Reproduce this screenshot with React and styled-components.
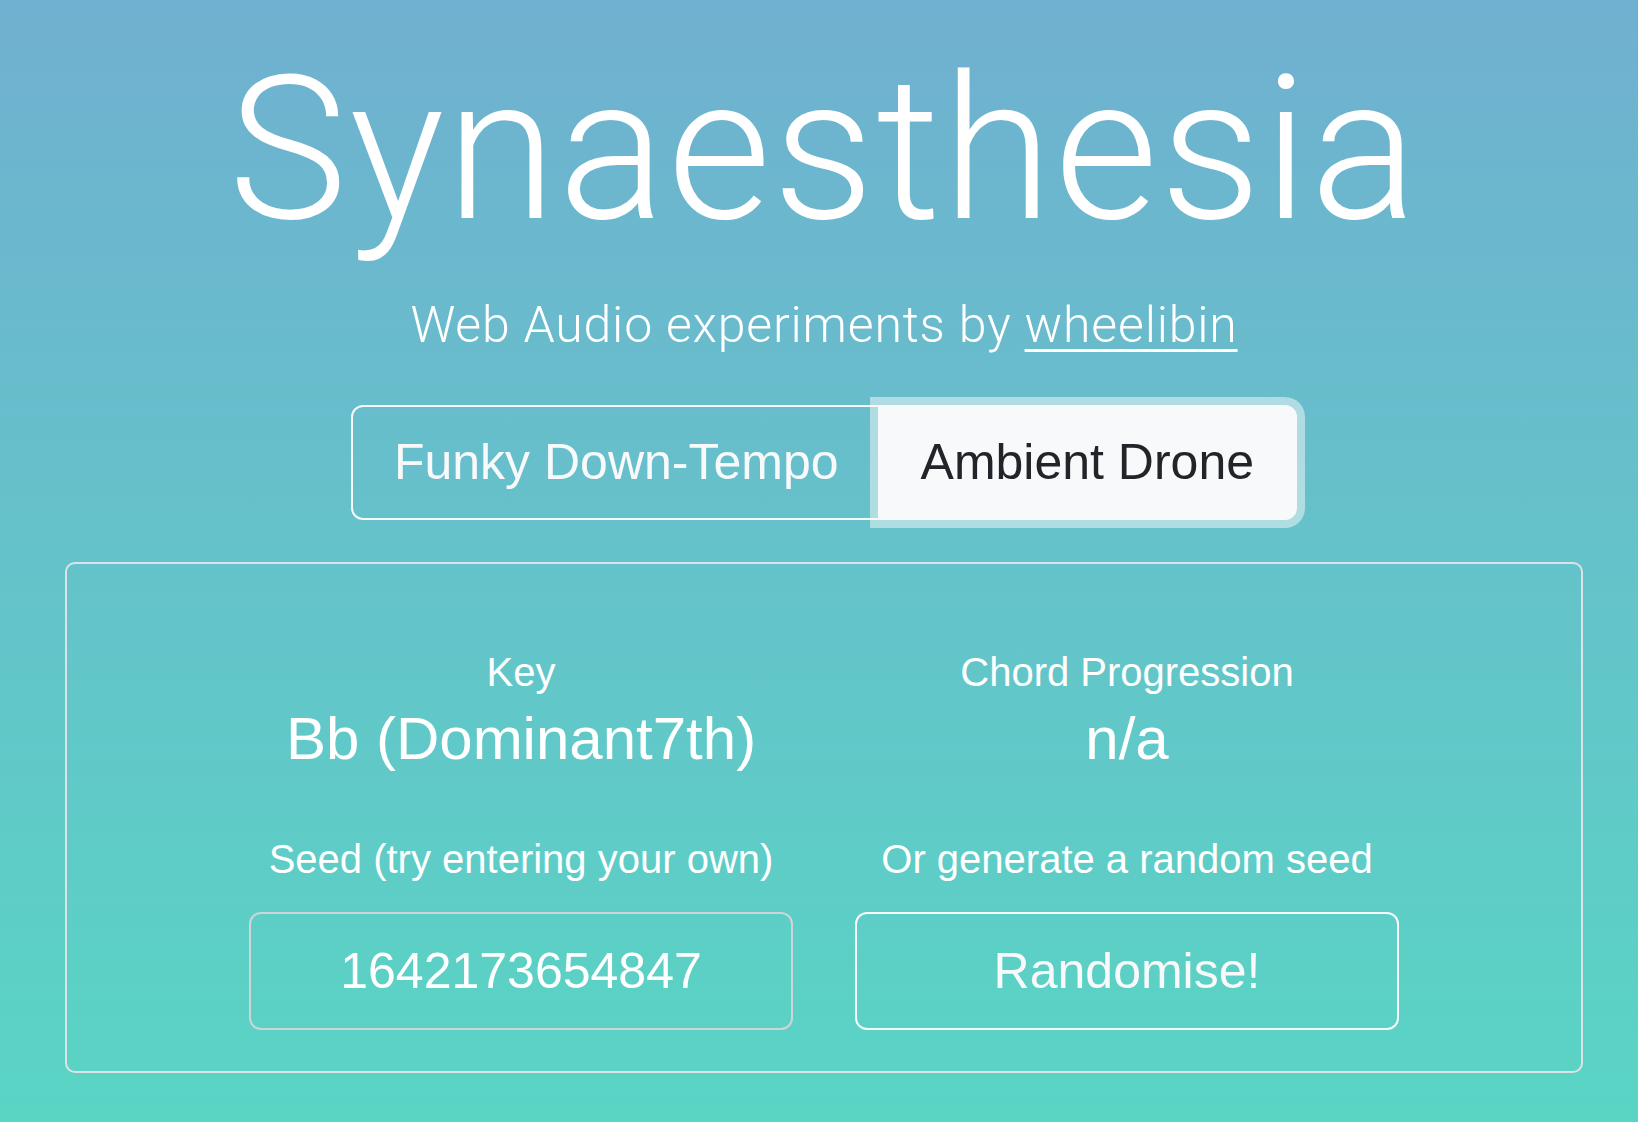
import React, { useState } from 'react';
import styled, { createGlobalStyle } from 'styled-components';

const GlobalStyle = createGlobalStyle`
  html, body {
    margin: 0;
    padding: 0;
    min-height: 100%;
  }
  body {
    font-family: "Liberation Sans", Arial, sans-serif;
    background: #59d5c4;
  }
  * {
    box-sizing: border-box;
  }
`;

const Page = styled.div`
  min-height: 100vh;
  padding: 30px 55px 0 65px;
  background: linear-gradient(180deg, #70b0d0 0%, #59d5c4 100%);
  color: #fff;
  display: flex;
  flex-direction: column;
  align-items: center;
`;

const Title = styled.h1`
  margin: 0;
  font-family: Roboto, "Liberation Sans", sans-serif;
  font-weight: 300;
  font-size: 200px;
  letter-spacing: 2px;
  line-height: 1.2;
  text-align: center;
`;

const Lead = styled.p`
  margin: 18px 0 0;
  font-family: Roboto, "Liberation Sans", sans-serif;
  font-weight: 300;
  font-size: 50px;
  letter-spacing: 0.8px;
  line-height: 1.5;
  text-align: center;

  a {
    color: #fff;
    text-decoration: underline;
    text-decoration-thickness: 3px;
    text-underline-offset: 7px;
  }
`;

const ModeGroup = styled.div`
  display: flex;
  margin-top: 42px;
`;

const ModeButton = styled.button`
  position: relative;
  z-index: ${(p) => (p.$active ? 1 : 0)};
  margin-left: ${(p) => (p.$first ? '0' : '-4px')};
  padding: 18px 41px;
  font-family: "Liberation Sans", Arial, sans-serif;
  font-size: 50px;
  line-height: 1.5;
  color: ${(p) => (p.$active ? '#212529' : '#f8f9fa')};
  background: ${(p) => (p.$active ? '#f8f9fa' : 'transparent')};
  border: 2px solid #f8f9fa;
  border-radius: ${(p) => (p.$first ? '12px 0 0 12px' : '0 12px 12px 0')};
  box-shadow: ${(p) => (p.$active ? '0 0 0 8px rgba(248, 249, 250, 0.5)' : 'none')};
  cursor: pointer;
  outline: none;
`;

const Card = styled.div`
  align-self: stretch;
  margin-top: 42px;
  padding: 84px 0 41px;
  border: 2px solid #dee2e6;
  border-radius: 10px;
`;

const Grid = styled.div`
  display: grid;
  grid-template-columns: 544px 544px;
  column-gap: 62px;
  row-gap: 60px;
  justify-content: center;
`;

const Cell = styled.div`
  display: flex;
  flex-direction: column;
  align-items: center;
  text-align: center;
`;

const Label = styled.div`
  font-size: 40px;
  line-height: 1.2;
`;

const Value = styled.div`
  margin-top: 7px;
  font-size: 60px;
  line-height: 1.2;
`;

const SeedInput = styled.input`
  width: 100%;
  margin-top: 29px;
  padding: 20px 24px 19px;
  font-family: "Liberation Sans", Arial, sans-serif;
  font-size: 50px;
  line-height: 1.5;
  text-align: center;
  color: #fff;
  background: transparent;
  border: 2px solid #ced4da;
  border-radius: 12px;
  outline: none;
`;

const RandomButton = styled.button`
  width: 100%;
  margin-top: 29px;
  padding: 20px 24px 19px;
  font-family: "Liberation Sans", Arial, sans-serif;
  font-size: 50px;
  line-height: 1.5;
  color: #f8f9fa;
  background: transparent;
  border: 2px solid #f8f9fa;
  border-radius: 12px;
  cursor: pointer;
`;

const modes = ['Funky Down-Tempo', 'Ambient Drone'];

const App = () => {
  const [mode, setMode] = useState('Ambient Drone');
  const [seed, setSeed] = useState('1642173654847');

  return (
    <Page>
      <GlobalStyle />
      <Title>Synaesthesia</Title>
      <Lead>
        Web Audio experiments by <a href="#">wheelibin</a>
      </Lead>
      <ModeGroup>
        {modes.map((m, i) => (
          <ModeButton key={m} $first={i === 0} $active={mode === m} onClick={() => setMode(m)}>
            {m}
          </ModeButton>
        ))}
      </ModeGroup>
      <Card>
        <Grid>
          <Cell>
            <Label>Key</Label>
            <Value>Bb (Dominant7th)</Value>
          </Cell>
          <Cell>
            <Label>Chord Progression</Label>
            <Value>n/a</Value>
          </Cell>
          <Cell>
            <Label>Seed (try entering your own)</Label>
            <SeedInput value={seed} onChange={(e) => setSeed(e.target.value)} />
          </Cell>
          <Cell>
            <Label>Or generate a random seed</Label>
            <RandomButton onClick={() => setSeed(String(Date.now()))}>Randomise!</RandomButton>
          </Cell>
        </Grid>
      </Card>
    </Page>
  );
};

export default App;
